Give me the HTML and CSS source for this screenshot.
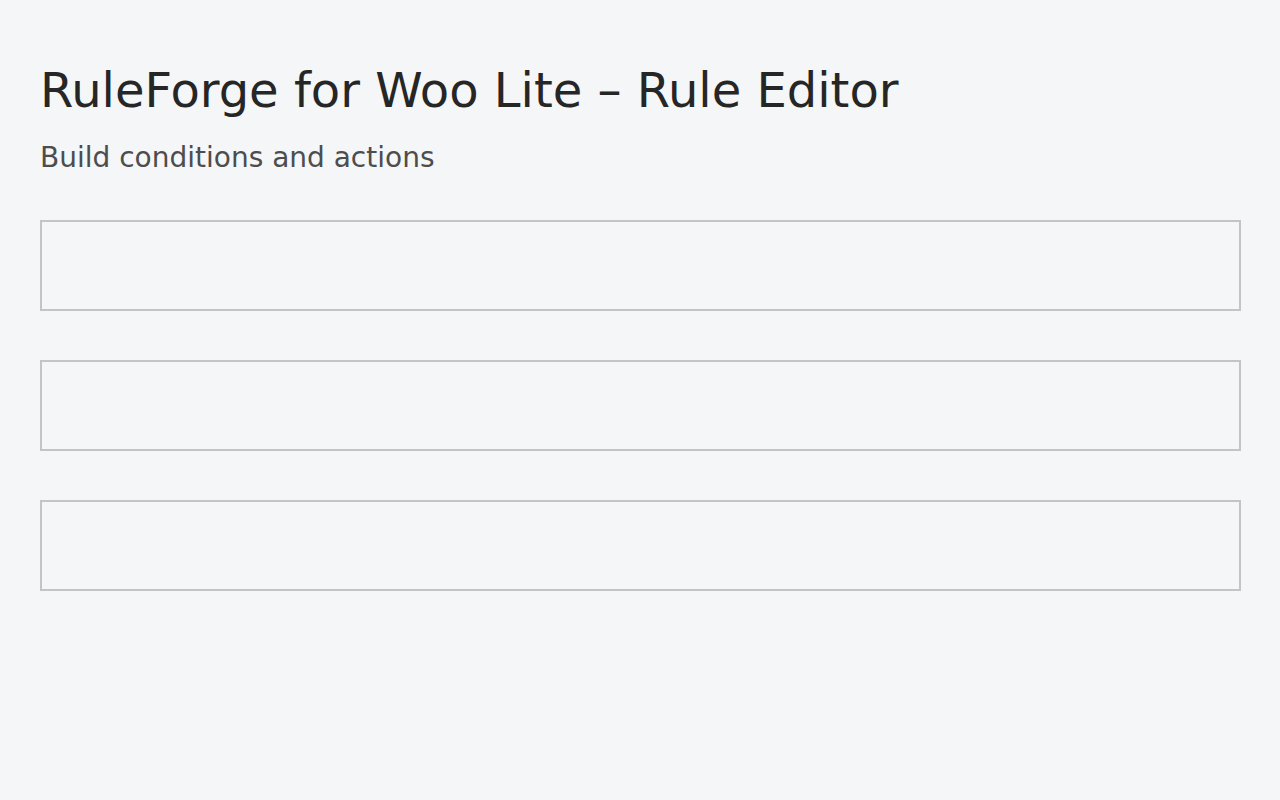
FILE: index.html
```html
<!DOCTYPE html>
<html lang="en">
<head>
<meta charset="utf-8">
<title>RuleForge for Woo Lite – Rule Editor</title>
<link rel="stylesheet" href="styles.css">
</head>
<body>
<main class="page">
  <h1 class="title">RuleForge for Woo Lite – Rule Editor</h1>
  <p class="subtitle">Build conditions and actions</p>
  <div class="panels">
    <section class="panel"></section>
    <section class="panel"></section>
    <section class="panel"></section>
  </div>
</main>
</body>
</html>
```
FILE: styles.css
```css
html, body {
  margin: 0;
  padding: 0;
  background: #f5f6f8;
}
body {
  font-family: "DejaVu Sans", sans-serif;
  color: #262626;
}
.page {
  padding: 58px 40px 40px;
}
.title {
  margin: 0;
  font-size: 48px;
  font-weight: normal;
  line-height: 64px;
  color: #262626;
}
.subtitle {
  margin: 19px 0 0;
  font-size: 28px;
  line-height: 34px;
  color: #4d4d4d;
}
.panels {
  margin-top: 45px;
  display: flex;
  flex-direction: column;
  gap: 49px;
}
.panel {
  width: 1201px;
  height: 91px;
  box-sizing: border-box;
  border: 2px solid #c4c4c6;
}
```
